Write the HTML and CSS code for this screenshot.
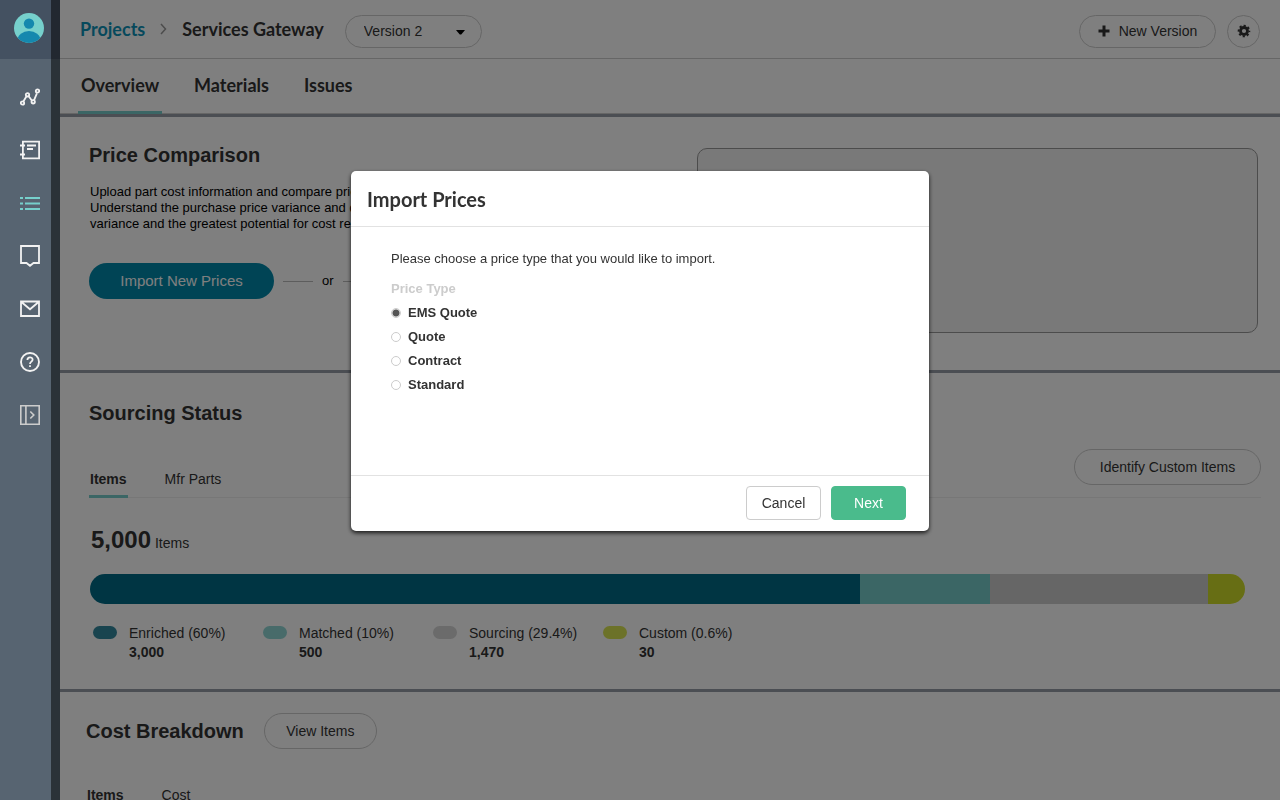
FILE: index.html
```html
<!DOCTYPE html>
<html lang="en">
<head>
<meta charset="utf-8">
<title>Services Gateway</title>
<link rel="stylesheet" href="styles.css">
</head>
<body>
<div class="app">
  <aside class="sidebar">
    <a class="avatar" href="#" aria-label="Account">
      <svg width="30" height="30" viewBox="0 0 30 30"><defs><clipPath id="face"><circle cx="15" cy="15" r="15"/></clipPath></defs><g clip-path="url(#face)"><rect width="30" height="30" fill="#76d0cc"/><circle cx="15" cy="10.6" r="5.2" fill="#1588ae"/><ellipse cx="15" cy="27.5" rx="11.5" ry="9.5" fill="#1588ae"/></g></svg>
    </a>
    <nav class="side-nav">
      <a href="#" aria-label="Analytics"><svg width="20" height="20" viewBox="0 0 20 20"><path d="M3.5 14.300 6.500 9.200M8.500 9l3.500 4.800M14 13.300l2.900-7"/><circle cx="2.500" cy="16" r="1.700"/><circle cx="7.500" cy="7.800" r="1.700"/><circle cx="13.200" cy="14.800" r="1.700"/><circle cx="17.500" cy="4" r="1.700"/></svg></a>
      <a href="#" aria-label="Catalog"><svg width="20" height="20" viewBox="0 0 20 20"><path d="M2.900 1.700h16.200v16.600H2.900zM0 5.500h5M0 14.500h5M7 5.500h9M7 9h6"/></svg></a>
      <a href="#" class="active" aria-label="Projects"><svg width="20" height="20" viewBox="0 0 20 20"><path d="M0 5h3M5 5h15M0 10.500h3M5 10.500h15M0 16h3M5 16h15"/></svg></a>
      <a href="#" aria-label="Messages"><svg width="20" height="22" viewBox="0 0 20 22"><path d="M1 1h18v17h-5.500L10 20.800 6.500 18H1z"/></svg></a>
      <a href="#" aria-label="Mail"><svg width="20" height="20" viewBox="0 0 20 20"><path d="M1 2.500h18v14.500H1zM2 3.500l8 6.800 8-6.800"/></svg></a>
      <a href="#" aria-label="Help"><svg width="20" height="20" viewBox="0 0 20 20"><circle cx="10" cy="10" r="9" stroke-width="1.900"/><path d="M7.400 8c0-3.600 5.200-3.500 5.200-.3 0 1.900-2.600 2-2.600 4.300M10 13.300v1.800"/></svg></a>
      <a href="#" class="dim" aria-label="Expand"><svg width="20" height="20" viewBox="0 0 20 20"><path d="M.8.8h18.400v18.400H.8zM5.900 1v18M10.300 6.500l3.500 3.500-3.500 3.500"/></svg></a>
    </nav>
  </aside>

  <main class="main">
    <header class="topbar">
      <div class="crumbs">
        <a href="#">Projects</a>
        <svg width="7" height="12" viewBox="0 0 7 12"><path d="M1 1l4.500 5L1 11" fill="none" stroke="#999" stroke-width="1.500"/></svg>
        <span>Services Gateway</span>
      </div>
      <div class="version">
        <select aria-label="Version"><option>Version 2</option></select>
        <svg width="9" height="5" viewBox="0 0 9 5"><path d="M0 0h9L5.500 4.200q-1 .8-2 0z"/></svg>
      </div>
      <button class="pill new-version"><svg width="12" height="12" viewBox="0 0 12 12"><path d="M6 .5v11M.5 6h11" stroke="#333" stroke-width="3"/></svg>New Version</button>
      <button class="gear" aria-label="Settings"><svg width="14" height="14" viewBox="0 0 14 14"><g fill="none" stroke="#333"><circle cx="7" cy="7" r="3.500" stroke-width="2.800"/><circle cx="7" cy="7" r="5.400" stroke-width="1.800" stroke-dasharray="2.200 2.041" stroke-dashoffset="1.100"/></g></svg></button>
    </header>
    <nav class="tabs">
      <a href="#" class="current">Overview</a>
      <a href="#">Materials</a>
      <a href="#">Issues</a>
    </nav>

    <section class="prices">
      <div class="prices-text">
        <h2>Price Comparison</h2>
        <p>Upload part cost information and compare prices.<br>Understand the purchase price variance and quote<br>variance and the greatest potential for cost reduction.</p>
        <div class="import-row"><button class="import">Import New Prices</button><i></i><span>or</span><i></i></div>
      </div>
      <div class="preview"></div>
    </section>

    <section class="sourcing">
      <h2>Sourcing Status</h2>
      <div class="subtabs">
        <a href="#" class="current">Items</a>
        <a href="#">Mfr Parts</a>
        <button class="pill identify">Identify Custom Items</button>
      </div>
      <div class="total"><strong>5,000</strong> <span>Items</span></div>
      <div class="bar">
        <div class="enriched" style="width:66.67%"></div>
        <div class="matched" style="width:11.25%"></div>
        <div class="pending" style="width:18.88%"></div>
        <div class="custom" style="width:3.2%"></div>
      </div>
      <ul class="legend">
        <li><i class="enriched"></i><div>Enriched (60%)<b>3,000</b></div></li>
        <li><i class="matched"></i><div>Matched (10%)<b>500</b></div></li>
        <li><i class="pending"></i><div>Sourcing (29.4%)<b>1,470</b></div></li>
        <li><i class="custom"></i><div>Custom (0.6%)<b>30</b></div></li>
      </ul>
    </section>

    <section class="cost">
      <div class="cost-head"><h2>Cost Breakdown</h2><button class="pill view">View Items</button></div>
      <div class="subtabs"><a href="#" class="current">Items</a><a href="#">Cost</a></div>
    </section>
  </main>
</div>

<div class="shade"></div>
<div class="modal-layer">
  <form class="modal" role="dialog" aria-modal="true" aria-labelledby="modal-title">
    <h1 id="modal-title">Import Prices</h1>
    <div class="modal-body">
      <p>Please choose a price type that you would like to import.</p>
      <fieldset>
        <legend>Price Type</legend>
        <label><input type="radio" name="type" checked>EMS Quote</label>
        <label><input type="radio" name="type">Quote</label>
        <label><input type="radio" name="type">Contract</label>
        <label><input type="radio" name="type">Standard</label>
      </fieldset>
    </div>
    <div class="modal-foot">
      <button type="button" class="cancel">Cancel</button>
      <button type="button" class="next">Next</button>
    </div>
  </form>
</div>
</body>
</html>
```
FILE: styles.css
```css
* { box-sizing: border-box; }
body { margin: 0; font: 14px/20px "Liberation Sans", Arial, sans-serif; color: #333; background: #fff; }
h1, h2, p, ul, fieldset, legend { margin: 0; padding: 0; border: 0; }
a { color: inherit; text-decoration: none; }
button, select, input { font: inherit; color: inherit; }
svg { display: block; flex: none; }

.app { display: flex; height: 100vh; overflow: hidden; }

.sidebar { flex: none; width: 60px; background: #576471; }
.avatar { display: flex; height: 59px; padding: 13px 14px; background: #445161; }
.side-nav { display: flex; flex-direction: column; padding-top: 11px; }
.side-nav a { display: flex; align-items: center; justify-content: center; height: 53px; }
.side-nav svg { fill: none; stroke: #f2f2f2; stroke-width: 1.8; }
.side-nav .active svg { stroke: #76d0cc; }
.side-nav .dim svg { stroke: #ccc; stroke-width: 1.6; }

.main { flex: 1; min-width: 0; }
.topbar { display: flex; align-items: center; height: 59px; padding: 4px 20px 0; border-bottom: 1px solid #ccc; }
.crumbs { display: flex; align-items: center; gap: 15px; padding-bottom: 4px; font: bold 18px/24px Lato, sans-serif; }
.crumbs a { color: #0d93b8; }
.version { position: relative; margin-left: 21px; }
.version select { appearance: none; width: 137px; height: 33px; padding: 0 18px; border: 1px solid #ccc; border-radius: 17px; background: none; }
.version svg { position: absolute; right: 17px; top: 15px; pointer-events: none; }
.pill { display: flex; align-items: center; justify-content: center; height: 36px; border: 1px solid #ccc; border-radius: 18px; background: none; white-space: nowrap; }
.new-version { gap: 9px; height: 33px; width: 137px; margin-left: auto; }
.gear { display: flex; align-items: center; justify-content: center; width: 33px; height: 33px; margin-left: 11px; padding: 0; border: 1px solid #ccc; border-radius: 50%; background: none; }

.tabs { display: flex; gap: 29px; height: 55px; padding: 0 18px; border-bottom: 1px solid #ccc; font: bold 18px/52px Lato, sans-serif; }
.tabs a { padding: 0 3px; height: 55px; }
.tabs .current { border-bottom: 3px solid #76cdca; }

section { border-top: 3px solid #969da7; }
h2 { font-size: 20px; line-height: 24px; }

.prices { display: flex; min-height: 256px; padding: 26px 22px 0 29px; }
.prices-text { flex: 1; min-width: 0; }
.prices-text p { margin-top: 17px; padding-left: 1px; font-size: 13px; line-height: 16px; color: #000; }
.import-row { display: flex; align-items: center; gap: 9px; margin-top: 31px; color: #000; font-size: 13px; }
.import-row i { width: 30px; height: 1px; background: #bbb; }
.import { width: 185px; height: 36px; border: 0; border-radius: 18px; background: #0089ab; color: #fff; font-size: 15px; }
.preview { flex: 0 0 48%; height: 185px; margin-top: 5px; border: 1px solid #999; border-radius: 10px; background: #f2f2f2; }

.sourcing { min-height: 319px; padding: 28px 19px 0 29px; }
.subtabs { display: flex; gap: 37px; line-height: 20px; }
.subtabs a.current { font-weight: bold; padding: 0 1px; }
.sourcing .subtabs { height: 49px; margin-top: 24px; border-bottom: 1px solid #eee; }
.sourcing .subtabs a { height: 49px; padding-top: 20px; }
.sourcing .subtabs a.current { border-bottom: 3px solid #76cdca; }
.identify { width: 187px; margin-left: auto; }
.total { margin: 27px 0 16px; padding-left: 2px; line-height: 30px; }
.total strong { font-size: 24px; }
.bar { display: flex; height: 30px; margin: 0 16px 0 1px; border-radius: 15px; overflow: hidden; }
.enriched { background: #006a86; }
.matched { background: #76cdca; }
.pending { background: #ccc; }
.custom { background: #cfdd28; }
.legend { display: grid; grid-template-columns: repeat(4, 170px); margin: 20px 0 0 4px; list-style: none; line-height: 19px; }
.legend li { display: flex; gap: 12px; }
.legend i { width: 24px; height: 13px; margin-top: 2px; border-radius: 7px; opacity: .8; }
.legend b { display: block; }

.cost { padding: 21px 26px; }
.cost-head { display: flex; align-items: center; gap: 20px; }
.view { width: 113px; }
.cost .subtabs { margin-top: 36px; }

.shade { position: fixed; inset: 0 0 0 51px; background: rgba(0, 0, 0, .5); }
.modal-layer { position: fixed; inset: 0; display: flex; justify-content: center; align-items: flex-start; padding-top: 171px; }
.modal { width: 578px; border-radius: 5px; background: #fff; box-shadow: 0 2px 4px rgba(0, 0, 0, .8); }
.modal h1 { padding: 0 16px; border-bottom: 1px solid #e2e2e2; font: bold 20px/56px Lato, sans-serif; height: 56px; }
.modal-body { min-height: 248px; padding: 22px 40px; font-size: 13px; }
.modal-body p { margin-bottom: 10px; }
.modal legend { color: #ccc; font-weight: bold; }
.modal fieldset { display: flex; flex-direction: column; }
.modal label { display: flex; align-items: center; gap: 7px; height: 24px; font-weight: bold; }
.modal legend + label { margin-top: 2px; }
.modal input { appearance: none; width: 10px; height: 10px; margin: 0; border: 1px solid #ccc; border-radius: 50%; background: #fff; }
.modal input:checked { background: radial-gradient(circle, #555 3px, #eee 4px); }
.modal-foot { display: flex; justify-content: flex-end; gap: 10px; padding: 10px 23px 11px; border-top: 1px solid #e2e2e2; }
.modal-foot button { width: 75px; height: 34px; border: 1px solid #ccc; border-radius: 4px; background: #fff; }
.modal-foot .next { border-color: #4abb8c; background: #4abb8c; color: #fff; }
```
